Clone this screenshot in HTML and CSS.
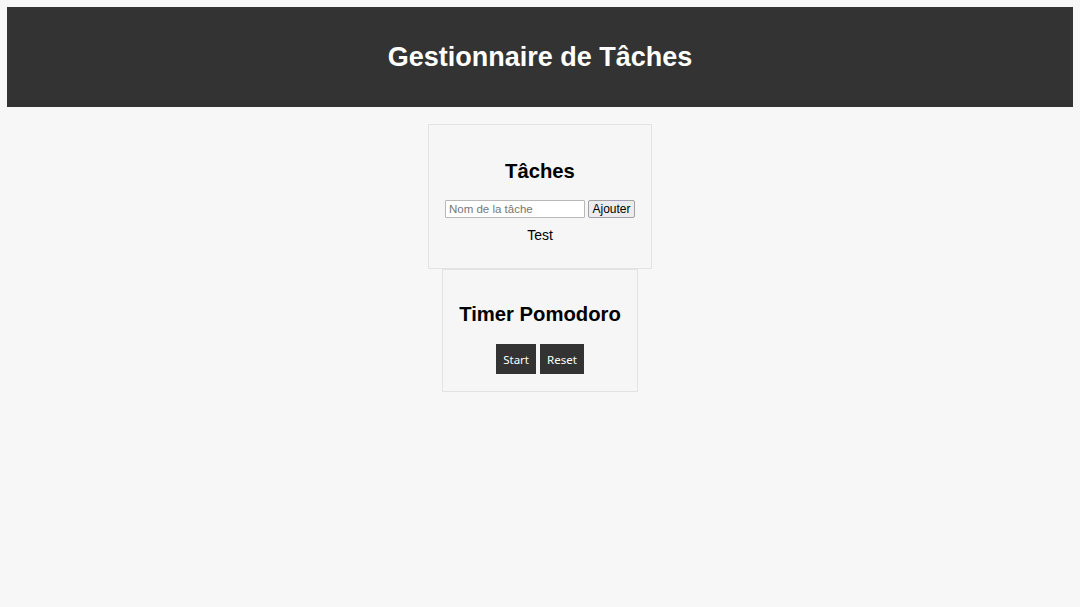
FILE: index.html
```html
<!DOCTYPE html>
<html lang="fr">
<head>
<meta charset="utf-8">
<title>Gestionnaire de Tâches</title>
<link rel="stylesheet" href="styles.css">
</head>
<body>
<header class="site-header">
  <h1 class="site-title">Gestionnaire de Tâches</h1>
</header>
<main class="main">
  <section class="card card-tasks">
    <h2 class="card-title">Tâches</h2>
    <div class="task-form">
      <input class="task-input" type="text" placeholder="Nom de la tâche">
      <button class="add-btn">Ajouter</button>
    </div>
    <ul class="task-list">
      <li class="task-item">Test</li>
    </ul>
  </section>
  <section class="card card-timer">
    <h2 class="card-title">Timer Pomodoro</h2>
    <div class="timer-controls">
      <button class="dark-btn">Start</button>
      <button class="dark-btn">Reset</button>
    </div>
  </section>
</main>
</body>
</html>
```
FILE: styles.css
```css
* { box-sizing: border-box; }
html, body { height: 100%; }
body {
  margin: 7px;
  background: #f7f7f7;
  font-family: "Liberation Sans", Arial, sans-serif;
  font-size: 13.5px;
  color: #111;
}
.site-header {
  background: #333333;
  height: 100px;
  display: flex;
  align-items: center;
  justify-content: center;
}
.site-title {
  margin: 0;
  color: #fff;
  font-size: 27px;
  font-weight: bold;
}
.main {
  display: flex;
  flex-direction: column;
  align-items: center;
  padding-top: 17px;
}
.card {
  border: 1px solid #e3e3e3;
  background: #f6f6f6;
  padding: 17px 16px;
  text-align: center;
}
.card-title {
  margin: 16px 0 17px;
  font-size: 20.25px;
  line-height: 24px;
  font-weight: bold;
  color: #000;
}
.card-tasks .card-title { margin-top: 17px; }
.card-timer .card-title { margin-top: 15px; margin-bottom: 18px; }
.task-form {
  display: flex;
  gap: 3px;
  justify-content: center;
}
.task-input {
  width: 140px;
  height: 18px;
  border: 1px solid #b8b8b8;
  border-radius: 1px;
  padding: 0 3px;
  font-family: "Liberation Sans", Arial, sans-serif;
  font-size: 11.5px;
  background: #fff;
}
.task-input::placeholder { color: #767676; }
.add-btn {
  height: 18px;
  width: 47px;
  padding: 0;
  border: 1px solid #a0a0a8;
  border-radius: 2px;
  background: #ececef;
  font-family: "Liberation Sans", Arial, sans-serif;
  font-size: 12px;
  color: #000;
}
.task-list {
  list-style: none;
  margin: 8px 0 7px;
  padding: 0;
}
.task-item {
  font-size: 14px;
  line-height: 18px;
  color: #000;
}
.timer-controls {
  display: flex;
  justify-content: center;
  gap: 4px;
}
.dark-btn {
  background: #333333;
  color: #fff;
  border: none;
  height: 30px;
  padding: 0 7px;
  font-family: "Noto Sans", "DejaVu Sans", sans-serif;
  font-size: 11.5px;
}
```
